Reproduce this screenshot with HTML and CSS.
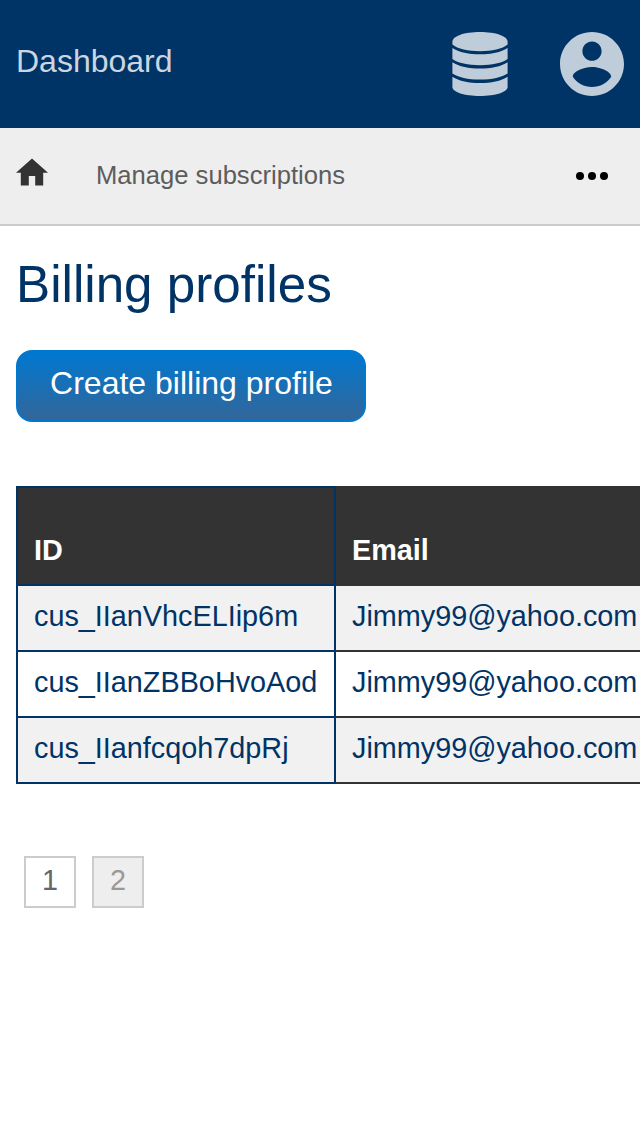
FILE: index.html
```html
<!DOCTYPE html>
<html lang="en">
<head>
<meta charset="utf-8">
<title>Billing profiles</title>
<link rel="stylesheet" href="styles.css">
</head>
<body>
<header class="topbar">
  <a class="brand">Dashboard</a>
  <div class="tools">
    <svg class="icon-db" viewBox="0 0 56 64">
      <path d="M28 0C43.500 0 55.600 4 55.600 9.700V12.600C50.500 17 40 19.300 28 19.300S5.500 17 .4 12.600V9.700C.4 4 12.500 0 28 0Z"/>
      <path d="M.4 16C7 20.300 17 22.300 28 22.300S49 20.300 55.600 16V27C50 31 40 33.200 28 33.200S6 31 .4 27Z"/>
      <path d="M.4 30.300C7 34.600 17 36.600 28 36.600S49 34.600 55.600 30.300V41.500C50 45.300 40 47.600 28 47.600S6 45.300 .4 41.500Z"/>
      <path d="M.4 44.700C7 49 17 51 28 51S49 49 55.600 44.700V55C55.600 60 43.500 64 28 64S.4 60 .4 55Z"/>
    </svg>
    <svg class="icon-user" viewBox="2 2 20 20">
      <path d="M12 2C6.480 2 2 6.480 2 12s4.480 10 10 10 10-4.480 10-10S17.520 2 12 2zm0 3c1.660 0 3 1.340 3 3s-1.340 3-3 3-3-1.340-3-3 1.340-3 3-3zm0 14.200c-2.500 0-4.710-1.280-6-3.220.03-1.990 4-3.080 6-3.080 1.990 0 5.970 1.090 6 3.080-1.290 1.940-3.500 3.220-6 3.220z"/>
    </svg>
  </div>
</header>
<nav class="subnav">
  <svg class="icon-home" viewBox="2 2.750 20 17.500"><path d="M10 20v-6h4v6h5v-8h3L12 3 2 12h3v8z"/></svg>
  <a class="crumb">Manage subscriptions</a>
  <svg class="icon-more" viewBox="0 0 32 8"><circle cx="4" cy="4" r="4"/><circle cx="16" cy="4" r="4"/><circle cx="28" cy="4" r="4"/></svg>
</nav>
<main class="content">
  <h1 class="title">Billing profiles</h1>
  <a class="create">Create billing profile</a>
  <table class="profiles">
    <thead>
      <tr><th class="id">ID</th><th>Email</th></tr>
    </thead>
    <tbody>
      <tr><td class="id">cus_IIanVhcELIip6m</td><td>Jimmy99@yahoo.com</td></tr>
      <tr><td class="id">cus_IIanZBBoHvoAod</td><td>Jimmy99@yahoo.com</td></tr>
      <tr><td class="id">cus_IIanfcqoh7dpRj</td><td>Jimmy99@yahoo.com</td></tr>
    </tbody>
  </table>
  <div class="pages">
    <a class="page">1</a>
    <a class="page current">2</a>
  </div>
</main>
</body>
</html>
```

FILE: styles.css
```css
* { box-sizing: border-box; }

body {
  margin: 0;
  min-height: 1136px;
  background: #fff;
  color: #036;
  font-family: "Liberation Sans", Arial, sans-serif;
}

svg { display: block; flex: none; }

.topbar {
  display: flex;
  justify-content: space-between;
  height: 128px;
  padding: 32px 16px 0;
  background: #036;
}

.brand {
  color: #ccd6e0;
  font-size: 32px;
  line-height: 58px;
}

.tools { display: flex; gap: 52px; fill: #bfccd9; }
.icon-db { width: 56px; height: 64px; }
.icon-user { width: 64px; height: 64px; }

.subnav {
  display: flex;
  align-items: flex-start;
  height: 98px;
  padding: 30px 32px 0 16px;
  border-bottom: 2px solid #ccc;
  background: #eee;
}

.icon-home { width: 32px; height: 28px; fill: #333; }

.crumb {
  flex: 1;
  padding-left: 48px;
  color: #5c5c5c;
  font-size: 25.6px;
  line-height: 35px;
}

.icon-more { width: 32px; height: 8px; margin-top: 14px; }

.content { padding: 28px 0 0 16px; }

.title {
  margin: 0 0 34px;
  font-size: 51.2px;
  font-weight: 400;
  line-height: 62px;
}

.create {
  display: block;
  width: 350px;
  height: 72px;
  padding-left: 1px;
  border: 2px solid #0078d0;
  border-radius: 16px;
  background: linear-gradient(#0078d0, #369);
  color: #fff;
  font-size: 32px;
  line-height: 62px;
  text-align: center;
}

.profiles {
  width: 100%;
  margin-top: 64px;
  border-spacing: 0;
  table-layout: fixed;
  font-size: 28.8px;
  line-height: 32px;
}

.profiles th,
.profiles td {
  padding: 14px 0 18px 16px;
  border-bottom: 2px solid #333;
  text-align: left;
}

.profiles th {
  padding-top: 46px;
  border-top: 2px solid #333;
  background: #333;
  color: #fff;
}

.profiles .id {
  width: 320px;
  border-color: #036;
  border-left: 2px solid #036;
  border-right: 2px solid #036;
}

.profiles tbody tr:nth-child(odd) { background: #f1f1f1; }

.pages { display: flex; gap: 16px; padding: 72px 8px 0; }

.page {
  width: 52px;
  height: 52px;
  border: 2px solid #ccc;
  color: #666;
  font-size: 28.8px;
  line-height: 44px;
  text-align: center;
}

.current { background: #eee; color: #999; }
```
